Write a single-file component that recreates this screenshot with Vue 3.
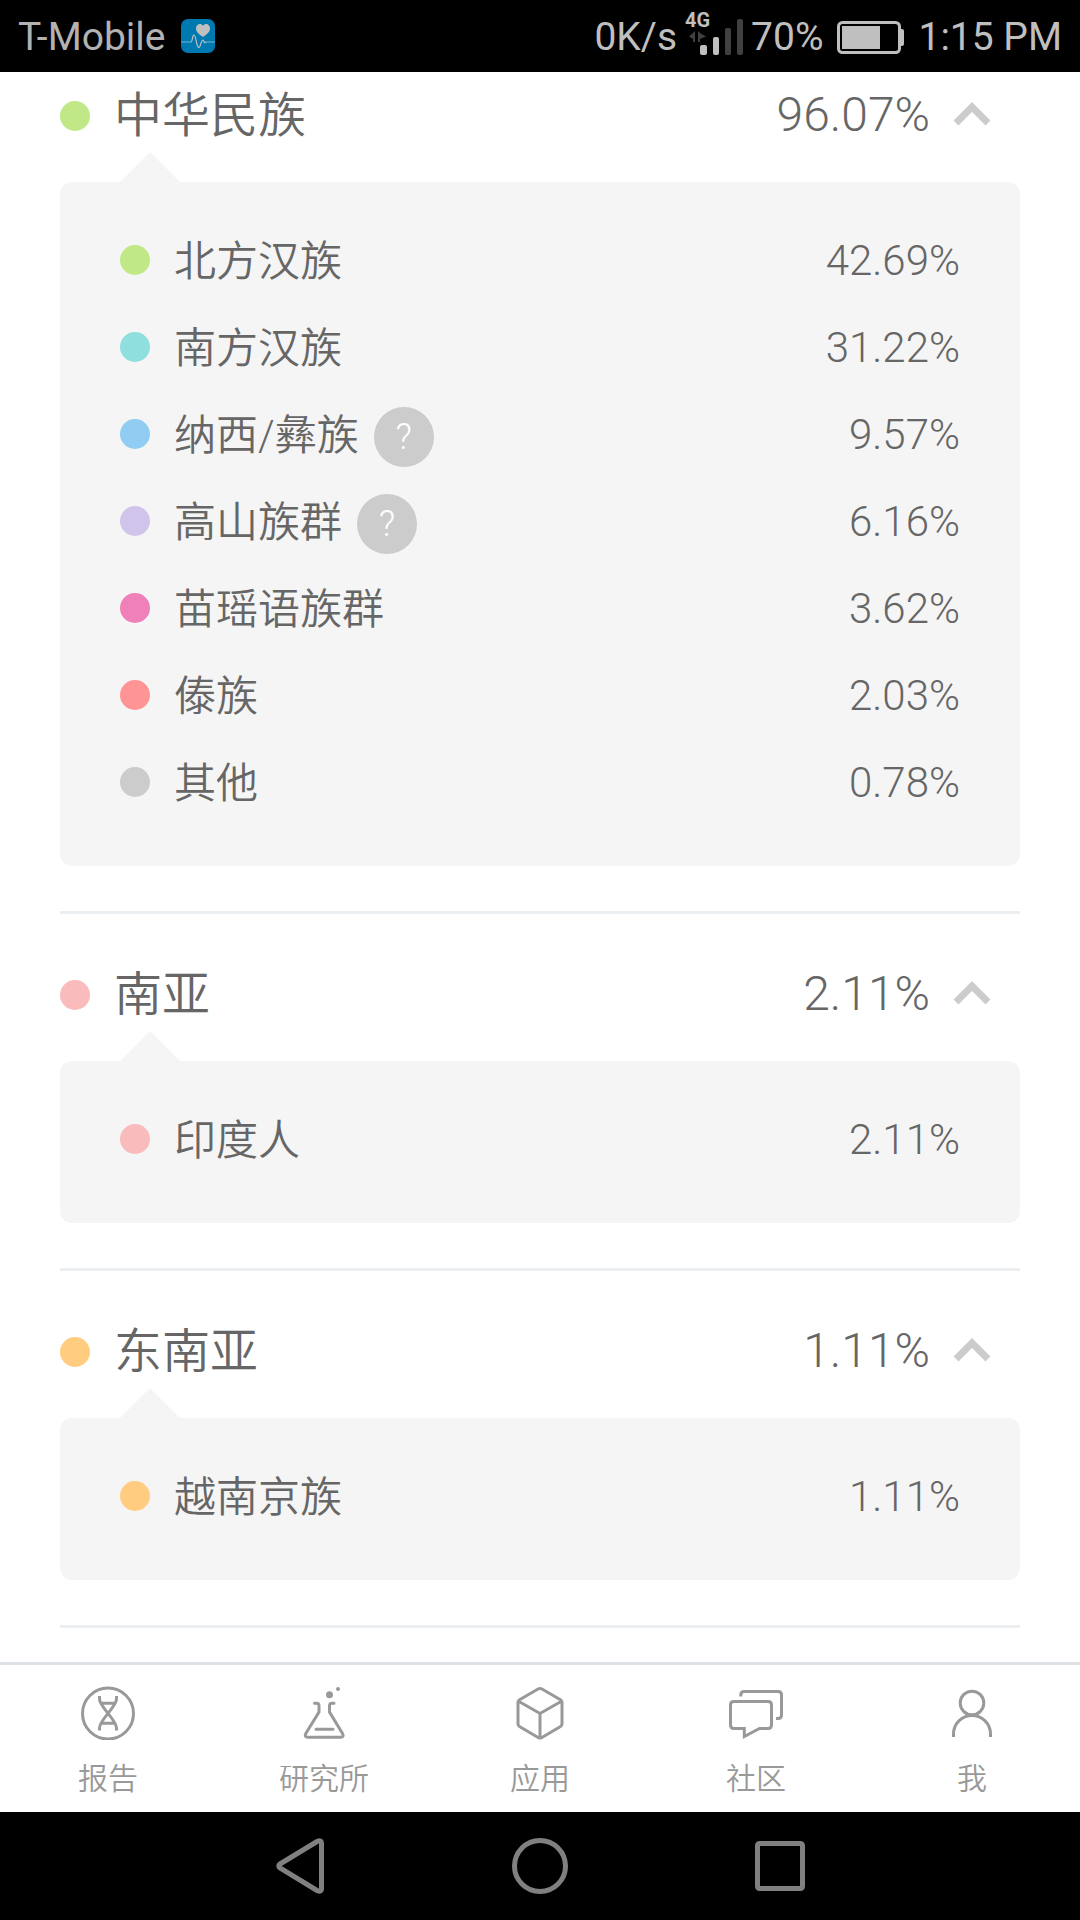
<script setup>
import { reactive } from 'vue'

const groups = reactive([
  {
    name: '中华民族', value: '96.07%', color: '#c0e886', open: true,
    items: [
      { name: '北方汉族', value: '42.69%', color: '#c0e886' },
      { name: '南方汉族', value: '31.22%', color: '#8fdfdf' },
      { name: '纳西/彝族', value: '9.57%', color: '#91cdf2', help: true },
      { name: '高山族群', value: '6.16%', color: '#d1c4eb', help: true },
      { name: '苗瑶语族群', value: '3.62%', color: '#ef80b9' },
      { name: '傣族', value: '2.03%', color: '#ff9494' },
      { name: '其他', value: '0.78%', color: '#cccccc' },
    ],
  },
  {
    name: '南亚', value: '2.11%', color: '#f9bbbb', open: true,
    items: [{ name: '印度人', value: '2.11%', color: '#f9bbbb' }],
  },
  {
    name: '东南亚', value: '1.11%', color: '#ffcc80', open: true,
    items: [{ name: '越南京族', value: '1.11%', color: '#ffcc80' }],
  },
])
</script>

<template>
  <div class="page">
    <header class="status">
      <div class="status-left">
        <span>T-Mobile</span>
        <svg width="34" height="34" viewBox="0 0 34 34" aria-hidden="true">
          <rect width="34" height="34" rx="7" fill="#0079b0" />
          <path d="M22 18 C18 15 15 13 15 9.500 C15 5 20 3.500 22 7 C24 3.500 29 5 29 9.500 C29 13 26 15 22 18Z" fill="#bfbfbf" />
          <path d="M0 23 H10" stroke="#4ba3c7" stroke-width="1.500" />
          <path d="M25 23 H34" stroke="#4ba3c7" stroke-width="1.500" />
          <path d="M10 23 C12 22 11 16 13 16 C15 16 15 25 17 28 C19 31 20 21 22 21 C23 21 23 25 25 23" fill="none" stroke="#bfbfbf" stroke-width="1.200" />
        </svg>
      </div>
      <div class="status-right">
        <span>0K/s</span>
        <svg class="signal" width="58" height="52" viewBox="0 -8 58 52" aria-hidden="true">
          <text x="0" y="16" class="net">4G</text>
          <path d="M10 20 V31 H8 V28 L4 25.500 L8 22Z M13 20 V31 H15 V28 L21 25.500 L15 22Z" fill="#404040" />
          <rect x="15" y="34" width="7" height="10" rx="2" fill="#bfbfbf" />
          <rect x="28" y="26" width="6" height="18" rx="2" fill="#bfbfbf" />
          <rect x="40" y="17" width="6" height="27" rx="2" fill="#404040" />
          <rect x="52" y="8" width="6" height="36" rx="2" fill="#404040" />
        </svg>
        <span>70%</span>
        <svg class="battery" width="67" height="33" viewBox="0 0 67 33" aria-hidden="true">
          <rect x="1.500" y="1.500" width="61" height="30" rx="4" fill="none" stroke="#bfbfbf" stroke-width="3" />
          <rect x="5" y="5" width="38" height="23" fill="#bfbfbf" />
          <path d="M63 8 h2 q2 0 2 2 v13 q0 2 -2 2 h-2z" fill="#bfbfbf" />
        </svg>
        <span>1:15 PM</span>
      </div>
    </header>

    <main class="content">
      <section v-for="group in groups" :key="group.name" class="group">
        <button class="group-head" type="button" :aria-expanded="group.open" @click="group.open = !group.open">
          <span class="dot" :style="{ background: group.color }"></span>
          <span class="title">{{ group.name }}</span>
          <span class="total">{{ group.value }}</span>
          <svg class="chevron" :class="{ closed: !group.open }" width="38" height="28" viewBox="0 0 38 28" aria-hidden="true">
            <path d="M3 21 L19 5 L35 21" fill="none" stroke="#ccc" stroke-width="7" />
          </svg>
        </button>
        <ul v-if="group.open" class="panel">
          <li v-for="item in group.items" :key="item.name" class="row">
            <span class="dot" :style="{ background: item.color }"></span>
            <span class="name">{{ item.name }}</span>
            <button v-if="item.help" class="help" type="button" :aria-label="item.name + '?'">?</button>
            <span class="value">{{ item.value }}</span>
          </li>
        </ul>
      </section>
    </main>

    <nav class="tabs">
      <a href="#report" class="tab">
        <svg class="icon" viewBox="0 0 54 54" aria-hidden="true">
          <circle cx="27" cy="27.500" r="25.500" />
          <path d="M18.500 10 V13 C18.500 21 35.500 33.500 35.500 42 V44.500 M35.500 10 V13 C35.500 21 18.500 33.500 18.500 42 V44.500 M20 17.300 H34 M20 37.300 H34" />
        </svg>
        <span>报告</span>
      </a>
      <a href="#lab" class="tab">
        <svg class="icon" viewBox="0 0 54 54" aria-hidden="true">
          <path stroke-linecap="round" d="M17.500 17.300 H19.500 Q22 17.300 22 19.800 V26 L8.800 47.500 Q7 51.300 11 51.300 H43.500 Q47.500 51.300 45.500 47.500 L32.500 26 V19.800 Q32.500 17.300 35 17.300 H37 M19 43.300 H36" />
          <circle class="solid" cx="32.500" cy="8.700" r="3.500" />
          <circle class="solid" cx="41" cy="3" r="2" />
        </svg>
        <span>研究所</span>
      </a>
      <a href="#apps" class="tab">
        <svg class="icon" viewBox="0 0 54 54" aria-hidden="true">
          <path stroke-linejoin="round" d="M25.500 2.800 Q27 2 28.500 2.800 L47.500 13.800 Q49 14.800 49 16.300 V38 Q49 39.500 47.500 40.500 L28.500 51.700 Q27 52.500 25.500 51.700 L6.500 40.500 Q5 39.500 5 38 V16.300 Q5 14.800 6.500 13.800Z M6 15.500 L27 27.500 L48 15.500 M27 27.500 V52" />
        </svg>
        <span>应用</span>
      </a>
      <a href="#community" class="tab">
        <svg class="icon" viewBox="0 0 54 54" aria-hidden="true">
          <path d="M11.800 10.500 V9 Q11.800 5.500 15.300 5.500 H49 Q52.500 5.500 52.500 9 V29 Q52.500 32.500 49 32.500 H47" />
          <path d="M5 15.500 H39 Q42.500 15.500 42.500 19 V39 Q42.500 42.500 39 42.500 H30.500 L15.300 50.500 V42.500 H5 Q1.500 42.500 1.500 39 V19 Q1.500 15.500 5 15.500Z" />
        </svg>
        <span>社区</span>
      </a>
      <a href="#me" class="tab">
        <svg class="icon" viewBox="0 0 54 54" aria-hidden="true">
          <circle cx="27" cy="17" r="11.800" />
          <path d="M8.500 51 V48 A18.500 18.500 0 0 1 45.500 48 V51" />
        </svg>
        <span>我</span>
      </a>
    </nav>

    <footer class="system">
      <button type="button" aria-label="返回">
        <svg width="60" height="60" viewBox="0 0 60 60">
          <path d="M10 28 L47 5.500 Q51.500 3.500 51.500 7.500 V52.500 Q51.500 56.500 47 54.500 L10 32 Q7.500 30 10 28Z" />
        </svg>
      </button>
      <button type="button" aria-label="主页">
        <svg width="60" height="60" viewBox="0 0 60 60"><circle cx="30" cy="30" r="25.500" /></svg>
      </button>
      <button type="button" aria-label="最近">
        <svg width="60" height="60" viewBox="0 0 60 60"><rect x="7.500" y="7.500" width="45" height="45" rx="2" /></svg>
      </button>
    </footer>
  </div>
</template>

<style>
body {
  margin: 0;
  background: #fff;
}
</style>

<style scoped>
.page {
  display: flex;
  flex-direction: column;
  min-height: 100vh;
  background: #fff;
  color: #666;
  font-family: Roboto, "Noto Sans CJK SC", sans-serif;
}

button {
  border: 0;
  padding: 0;
  background: none;
  color: inherit;
  font: inherit;
  cursor: pointer;
}

.status {
  display: flex;
  align-items: center;
  justify-content: space-between;
  height: 72px;
  padding: 0 18px;
  background: #000;
  color: #bfbfbf;
  font-size: 39px;
}

.status-left,
.status-right {
  display: flex;
  align-items: center;
  line-height: 48px;
}

.status span {
  padding-top: 2px;
}

.status-left {
  gap: 16px;
  color: #b2b2b2;
}

.status-right {
  gap: 8px;
}

.signal {
  margin-bottom: 14px;
}

.battery {
  margin: 2px 6px 0;
}

.net {
  fill: #bfbfbf;
  font-size: 20px;
  font-weight: 700;
}

.content {
  flex: 1;
  padding: 0 60px;
}

.group {
  padding: 45px 0;
  border-bottom: 3px solid #ebeff2;
}

.group:first-child {
  padding-top: 8px;
}

.group:last-child {
  margin-bottom: 34px;
}

.group-head {
  display: flex;
  align-items: center;
  width: 100%;
  height: 72px;
  padding-right: 29px;
  font-size: 48px;
  line-height: 72px;
}

.title,
.name {
  font-weight: 350;
}

.dot {
  flex: none;
  width: 30px;
  height: 30px;
  margin-right: 24px;
  border-radius: 50%;
}

.total,
.value {
  margin-left: auto;
  font-weight: 300;
}

.total {
  padding-bottom: 2px;
}

.chevron {
  margin-left: 23px;
}

.chevron.closed {
  transform: rotate(180deg);
}

.panel {
  position: relative;
  display: flex;
  flex-direction: column;
  gap: 3px;
  margin: 30px 0 0;
  padding: 36px 60px 42px;
  border-radius: 12px;
  background: #f5f5f5;
  list-style: none;
}

.panel::before {
  content: "";
  position: absolute;
  bottom: 100%;
  left: 60px;
  border: 30px solid transparent;
  border-top: 0;
  border-bottom-color: #f5f5f5;
}

.row {
  display: flex;
  align-items: center;
  height: 84px;
  font-size: 42px;
  line-height: 84px;
}

.name {
  padding-top: 4px;
}

.value {
  padding-top: 2px;
}

.help {
  width: 60px;
  height: 60px;
  margin: 6px 0 0 15px;
  border-radius: 50%;
  background: #ccc;
  color: #fff;
  font-size: 36px;
  font-weight: 300;
  line-height: 60px;
}

.tabs {
  display: flex;
  border-top: 3px solid #dfe3e8;
  background: #fff;
}

.tab {
  display: flex;
  flex: 1;
  flex-direction: column;
  align-items: center;
  gap: 18px;
  padding: 21px 0 12px;
  color: #999;
  font-size: 30px;
  font-weight: 350;
  line-height: 42px;
  text-decoration: none;
}

.icon {
  width: 54px;
  height: 54px;
  fill: none;
  stroke: #999;
  stroke-width: 3;
}

.solid {
  fill: #999;
  stroke: none;
}

.system {
  display: flex;
  align-items: center;
  justify-content: center;
  gap: 180px;
  height: 108px;
  background: #000;
}

.system svg {
  display: block;
  fill: none;
  stroke: #808080;
  stroke-width: 5;
}
</style>
